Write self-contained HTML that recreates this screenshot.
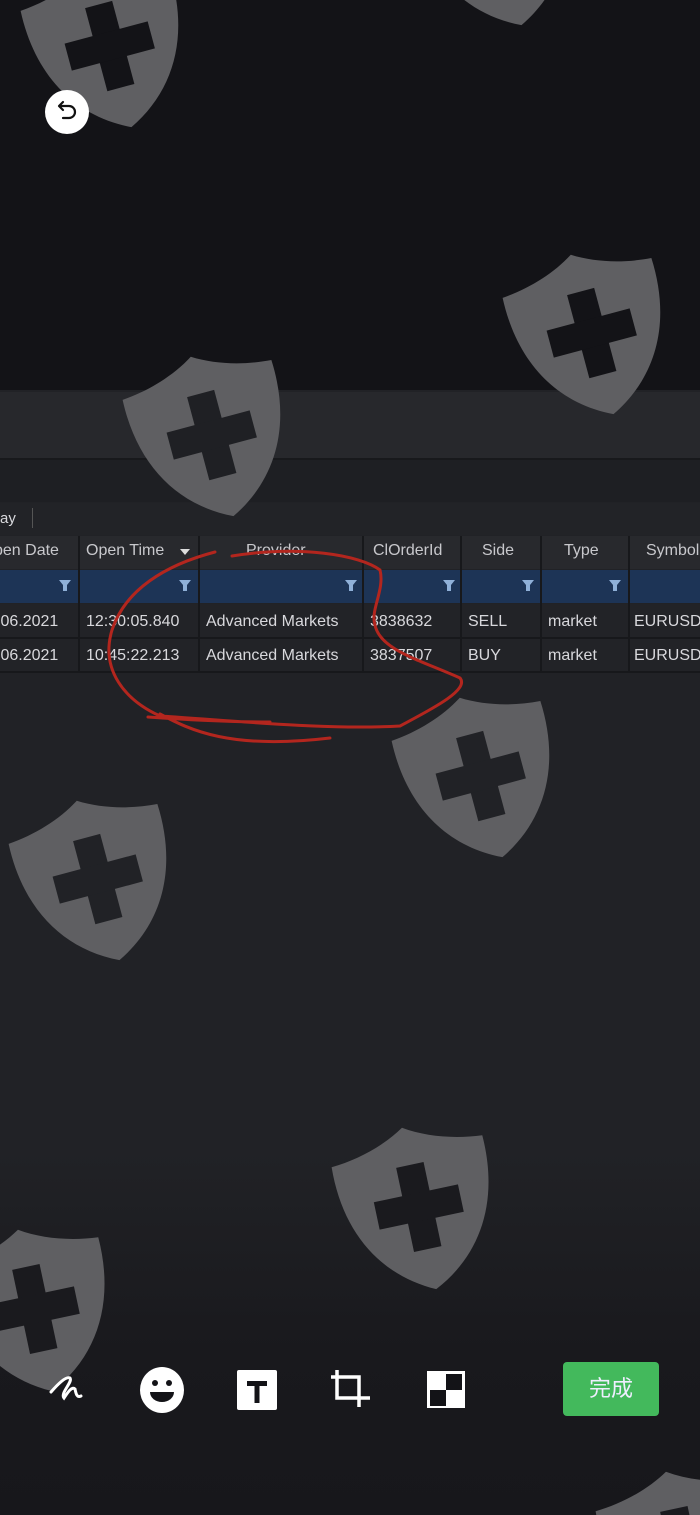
<!DOCTYPE html>
<html><head><meta charset="utf-8"><style>
body{margin:0;width:700px;height:1515px;overflow:hidden;background:#131317;font-family:"Liberation Sans","Noto Sans CJK SC",sans-serif;position:relative}
.a{position:absolute}
.t{font-size:16px;color:#d8d8dc;white-space:nowrap}
.h{color:#c8c8cc}
</style></head><body>
<div class="a" style="left:0;top:390px;width:700px;height:1125px;background:linear-gradient(#212226 0,#212226 760px,#19191d 960px,#17171b 1125px)"></div>
<div class="a" style="left:0;top:392px;width:700px;height:66px;background:#27282c"></div>
<div class="a" style="left:0;top:458px;width:700px;height:2px;background:#18191c"></div>
<div class="a" style="left:0;top:460px;width:700px;height:42px;background:#1e1f23"></div>
<div class="a" style="left:0;top:503px;width:700px;height:32px;background:#222327"></div>
<div class="a t" style="left:0;top:510px;font-size:15px">ay</div>
<div class="a" style="left:32px;top:508px;width:1px;height:20px;background:#555"></div>
<div class="a" style="left:0;top:536px;width:700px;height:33px;background:#28292d"></div>
<div class="a" style="left:0;top:570px;width:700px;height:33px;background:#1d3456"></div>
<div class="a" style="left:0;top:604px;width:700px;height:69px;background:#222327"></div>
<svg class="a" style="left:0;top:536px" width="700" height="140">
<g stroke="#17181b" stroke-width="2">
<line x1="79" y1="0" x2="79" y2="137"/><line x1="199" y1="0" x2="199" y2="137"/><line x1="363" y1="0" x2="363" y2="137"/><line x1="461" y1="0" x2="461" y2="137"/><line x1="541" y1="0" x2="541" y2="137"/><line x1="629" y1="0" x2="629" y2="137"/>
<line x1="0" y1="102" x2="700" y2="102"/><line x1="0" y1="136" x2="700" y2="136"/></g>
<g fill="#8fb0d8"><path d="M59,44h12l-4,5v6h-4v-6z"/><path d="M179,44h12l-4,5v6h-4v-6z"/><path d="M345,44h12l-4,5v6h-4v-6z"/><path d="M443,44h12l-4,5v6h-4v-6z"/><path d="M522,44h12l-4,5v6h-4v-6z"/><path d="M609,44h12l-4,5v6h-4v-6z"/></g>
<path d="M180,13h10l-5,6z" fill="#ddd"/>
</svg>
<div class="a t h" style="left:-6px;top:542px">pen Date</div>
<div class="a t h" style="left:86px;top:542px">Open Time</div>
<div class="a t h" style="left:246px;top:542px">Provider</div>
<div class="a t h" style="left:373px;top:542px">ClOrderId</div>
<div class="a t h" style="left:482px;top:542px">Side</div>
<div class="a t h" style="left:564px;top:542px">Type</div>
<div class="a t h" style="left:646px;top:542px">Symbol</div>
<div class="a t" style="left:-4px;top:613px">.06.2021</div>
<div class="a t" style="left:86px;top:613px">12:30:05.840</div>
<div class="a t" style="left:206px;top:613px">Advanced Markets</div>
<div class="a t" style="left:370px;top:613px">3838632</div>
<div class="a t" style="left:468px;top:613px">SELL</div>
<div class="a t" style="left:548px;top:613px">market</div>
<div class="a t" style="left:634px;top:613px">EURUSD</div>
<div class="a t" style="left:-4px;top:647px">.06.2021</div>
<div class="a t" style="left:86px;top:647px">10:45:22.213</div>
<div class="a t" style="left:206px;top:647px">Advanced Markets</div>
<div class="a t" style="left:370px;top:647px">3837507</div>
<div class="a t" style="left:468px;top:647px">BUY</div>
<div class="a t" style="left:548px;top:647px">market</div>
<div class="a t" style="left:634px;top:647px">EURUSD</div>

<svg class="a" style="left:0;top:0" width="700" height="1515">
<defs><g id="s"><path d="M78,0 C100,14 128,22 155,24 C158,90 130,140 78,165 C26,140 -2,90 1,24 C28,22 56,14 78,0Z" fill="#5f5f62"/>
<g fill="currentColor"><rect x="64" y="38" width="28" height="86"/><rect x="35" y="67" width="86" height="28"/></g></g></defs>
<g style="color:#131317">
<use href="#s" transform="translate(32,-35) rotate(-15 78 82)"/>
<use href="#s" transform="translate(422,-137) rotate(-15 78 82)"/>
<use href="#s" transform="translate(514,252) rotate(-15 78 82)"/>
</g>
<use href="#s" style="color:#1f2024" transform="translate(134,354) rotate(-15 78 82)"/>
<g style="color:#212226">
<use href="#s" transform="translate(403,695) rotate(-15 78 82)"/>
<use href="#s" transform="translate(20,798) rotate(-15 78 82)"/>
</g>
<g style="color:#1a1a1e">
<use href="#s" transform="translate(341,1126) rotate(-12 78 82)"/>
<use href="#s" transform="translate(-43,1228) rotate(-12 78 82)"/>
<use href="#s" transform="translate(605,1470) rotate(-12 78 82)"/>
</g>
<path d="M232,556 C300,545 360,555 380,570 C385,590 370,610 375,625 C380,650 420,660 460,678 C470,690 430,710 400,726 C330,730 250,722 160,716 C125,700 100,670 112,630 C125,590 165,565 215,552 M148,717 C190,720 230,722 270,722 M160,714 C190,730 230,750 330,738" fill="none" stroke="#b3261e" stroke-width="3" stroke-linecap="round"/>
<circle cx="67" cy="112" r="22" fill="#fff"/>
<path d="M60,106 h9 a6,6 0 0 1 0,12 h-6 M63,102 l-4,4 4,4" fill="none" stroke="#111" stroke-width="2.2" stroke-linecap="round" stroke-linejoin="round"/>
<path d="M51,1392 C58,1384 66,1376 70,1378 C73,1382 60,1393 64,1398 C68,1392 72,1386 75,1389 C76,1394 77,1398 81,1396" fill="none" stroke="#fff" stroke-width="3" stroke-linecap="round"/>
<ellipse cx="162" cy="1390" rx="22" ry="23" fill="#fff"/>
<circle cx="155" cy="1383" r="3" fill="#131317"/><circle cx="169" cy="1383" r="3" fill="#131317"/>
<path d="M150,1392 h24 a12,10 0 0 1 -24,0z" fill="#131317"/>
<rect x="237" y="1370" width="40" height="40" rx="2" fill="#fff"/>
<path d="M247,1381h20v5h-7.5v17h-5v-17h-7.5z" fill="#131317"/>
<path d="M337,1370 v28 h33 M331,1377 h28 v30" fill="none" stroke="#fff" stroke-width="3.5"/>
<rect x="427" y="1371" width="38" height="37" fill="#fff"/>
<rect x="430" y="1390" width="16" height="16" fill="#131317"/><rect x="446" y="1374" width="16" height="16" fill="#131317"/>
</svg>
<div class="a" style="left:563px;top:1362px;width:96px;height:54px;background:#43b95c;border-radius:4px;color:#eef;font-size:22px;line-height:54px;text-align:center">完成</div>
</body></html>
